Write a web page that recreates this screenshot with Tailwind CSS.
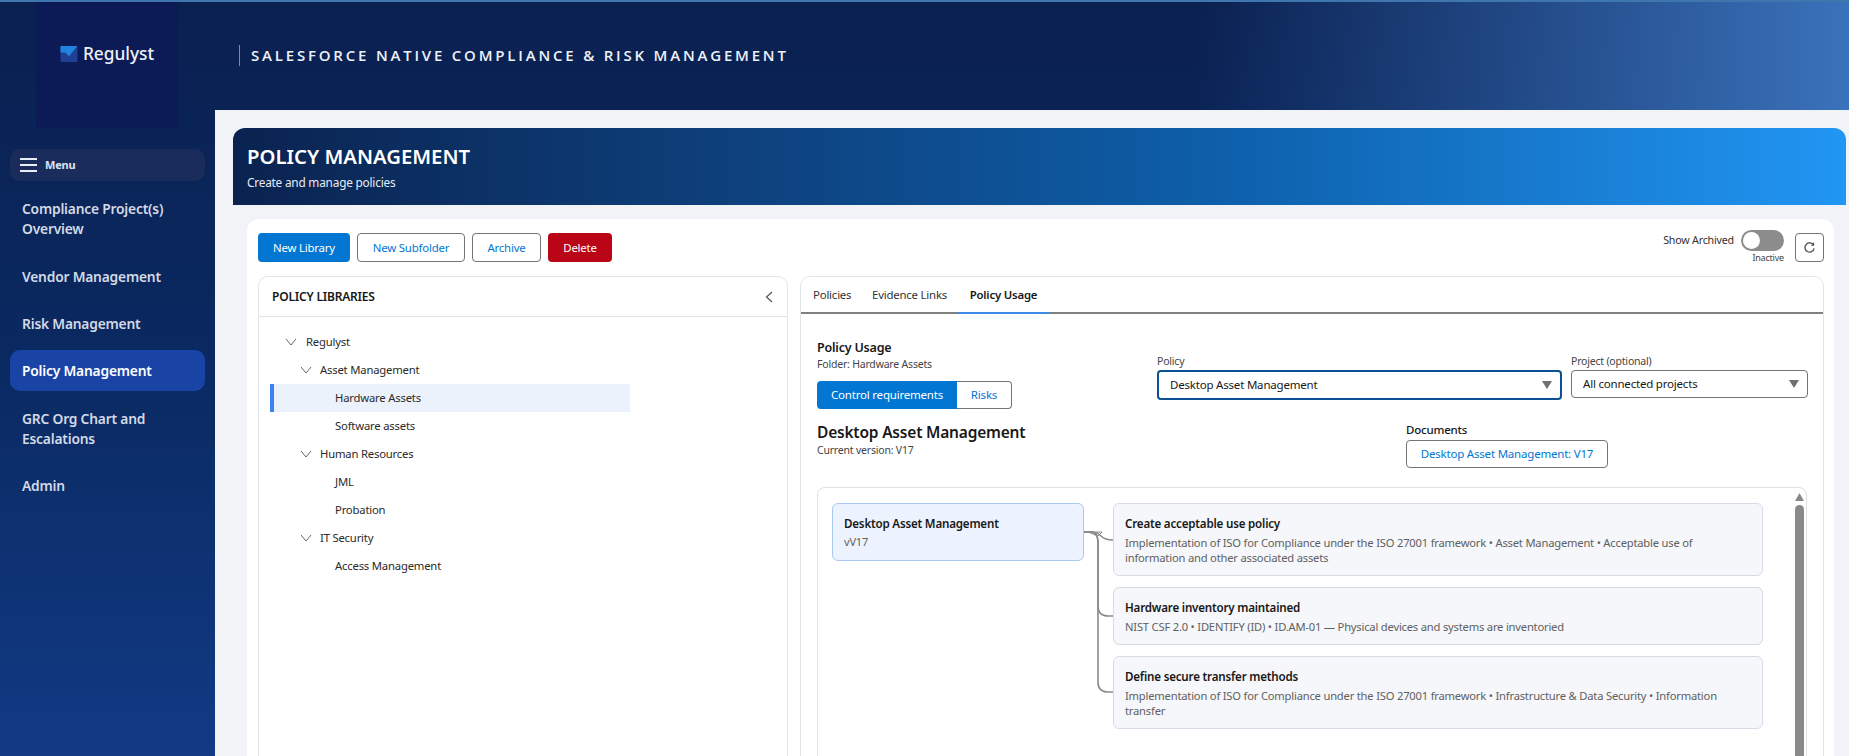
<!DOCTYPE html>
<html lang="en">
<head>
  <meta charset="UTF-8">
  <title>Regulyst - Policy Management</title>
  <script src="https://cdn.jsdelivr.net/npm/@tailwindcss/browser@4"></script>
</head>
<body class="font-['Noto_Sans',sans-serif] text-[#181818] tracking-[-0.2px]">
  <div class="h-[756px] w-[1849px] overflow-hidden flex bg-gradient-to-b from-[#0a2050] via-[#0a2a62] to-[#123a85] relative">
    <div class="absolute top-0 left-0 w-full h-[2px] bg-[#3f76ad]"></div>

    <!-- sidebar -->
    <aside class="w-[215px] shrink-0 flex flex-col">
      <div class="ml-[36px] w-[142px] h-[128px] bg-[#0c1a56] flex items-center justify-center pb-[20px] gap-[5px]">
        <svg width="18" height="16" viewBox="0 0 18 17">
          <rect width="18" height="17" fill="#1f3f94"/>
          <path d="M0 0H18L9 11L5 7L0 7Z" fill="#2183e0"/>
        </svg>
        <span class="text-[17.3px] font-medium text-[#eef1f7] tracking-normal">Regulyst</span>
      </div>
      <div class="mx-[10px] mt-[21px] h-[32px] rounded-[10px] bg-[#1a2c5c] flex items-center pl-[10px] gap-[7px]">
        <svg width="18" height="14" viewBox="0 0 18 14" stroke="#e8ecf5" stroke-width="2"><path d="M0 1H17M0 7H17M0 13H17"/></svg>
        <span class="text-[11px] font-bold text-[#dfe4f0]">Menu</span>
      </div>
      <nav class="mt-[18px] mx-[10px] text-[13.8px] font-semibold text-[#d3d9e6] leading-[20px]">
        <div class="pl-[12px] h-[40px] flex items-center">Compliance Project(s)<br>Overview</div>
        <div class="pl-[12px] h-[47px] mt-[14px] flex items-center">Vendor Management</div>
        <div class="pl-[12px] h-[47px] flex items-center">Risk Management</div>
        <div class="pl-[12px] h-[41px] mt-[3px] flex items-center rounded-[10px] bg-[#1a43a6] text-white">Policy Management</div>
        <div class="pl-[12px] h-[40px] mt-[18px] flex items-center">GRC Org Chart and<br>Escalations</div>
        <div class="pl-[12px] h-[47px] mt-[13px] flex items-center">Admin</div>
      </nav>
    </aside>

    <!-- right side -->
    <div class="flex-1 min-w-0 flex flex-col">
      <header class="h-[110px] shrink-0 bg-gradient-to-r from-transparent via-transparent via-60% to-[#3a72bb] flex items-start">
        <div class="mt-[45px] ml-[24px] h-[21px] border-l border-[#7e8aa8] pl-[11px] text-[15px] font-semibold text-[#eef1f7] tracking-[2.8px] leading-[21px] font-['Open_Sans',sans-serif]">SALESFORCE NATIVE COMPLIANCE &amp; RISK MANAGEMENT</div>
      </header>

      <main class="flex-1 min-h-0 bg-[#f2f3f7] pt-[18px] pl-[18px] pr-[3px]">
        <div class="h-[77px] rounded-t-[12px] bg-gradient-to-r from-[#0a2350] via-[#0d5ea8] via-60% to-[#2196f3] pl-[14px] pt-[14px] text-white">
          <h1 class="text-[20.3px] leading-[28px] font-semibold tracking-normal">POLICY MANAGEMENT</h1>
          <p class="text-[11.8px] leading-[16px] mt-[4px] text-[#e6ebf3]">Create and manage policies</p>
        </div>

        <div class="ml-[14px] mr-[12px] mt-[14px] h-[600px] rounded-[12px] bg-white pt-[14px] pl-[11px] pr-[10px]">
          <!-- toolbar -->
          <div class="flex justify-between h-[29px]">
            <div class="flex gap-[7px] text-[11.4px]">
              <button class="h-[29px] w-[92px] rounded-[4px] bg-[#0176d3] text-white">New Library</button>
              <button class="h-[29px] w-[108px] rounded-[4px] border border-[#747474] bg-white text-[#0176d3]">New Subfolder</button>
              <button class="h-[29px] w-[69px] rounded-[4px] border border-[#747474] bg-white text-[#0176d3]">Archive</button>
              <button class="h-[29px] w-[64px] rounded-[4px] bg-[#ba0517] text-white">Delete</button>
            </div>
            <div class="flex items-start relative">
              <span class="text-[10.7px] leading-[14px] text-[#333]">Show Archived</span>
              <div class="ml-[7px] -mt-[3px] w-[43px] h-[21px] rounded-full bg-[#8c8c8c] p-[2px]">
                <div class="w-[17px] h-[17px] rounded-full bg-white"></div>
              </div>
              <span class="absolute right-[40px] top-[19px] text-[9px] leading-[12px] text-[#444]">Inactive</span>
              <div class="ml-[11px] w-[29px] h-[29px] rounded-[4px] border border-[#747474] flex items-center justify-center">
                <svg width="13" height="13" viewBox="0 0 14 14" fill="none" stroke="#555" stroke-width="1.5"><path d="M11.5 4.5A5 5 0 1 0 12 8"/><path d="M12 1.2V5H8.5" fill="#555" stroke="none"/></svg>
              </div>
            </div>
          </div>

          <div class="flex gap-[12px] mt-[14px] h-[600px]">
            <!-- libraries -->
            <section class="w-[530px] shrink-0 border border-[#e2e4ea] rounded-t-[10px]">
              <div class="h-[40px] border-b border-[#e2e4ea] flex items-center justify-between pl-[13px] pr-[14px]">
                <h2 class="text-[12px] font-semibold">POLICY LIBRARIES</h2>
                <svg width="8" height="12" viewBox="0 0 8 12" fill="none" stroke="#555" stroke-width="1.2"><path d="M7 1L1.5 6L7 11"/></svg>
              </div>
              <div class="pt-[11px] pl-[11px] text-[11.3px] text-[#2b2b2b]">
                <div class="h-[28px] w-[360px] flex items-center pl-[15px] gap-[9px]"><svg width="12" height="8" viewBox="0 0 12 8" fill="none" stroke="#666"><path d="M1 1L6 7L11 1"/></svg>Regulyst</div>
                <div class="h-[28px] w-[360px] flex items-center pl-[30px] gap-[8px]"><svg width="12" height="8" viewBox="0 0 12 8" fill="none" stroke="#666"><path d="M1 1L6 7L11 1"/></svg>Asset Management</div>
                <div class="h-[28px] w-[360px] flex items-center pl-[61px] bg-[#ebf2fc] border-l-[4px] border-[#3b82f6]">Hardware Assets</div>
                <div class="h-[28px] w-[360px] flex items-center pl-[65px]">Software assets</div>
                <div class="h-[28px] w-[360px] flex items-center pl-[30px] gap-[8px]"><svg width="12" height="8" viewBox="0 0 12 8" fill="none" stroke="#666"><path d="M1 1L6 7L11 1"/></svg>Human Resources</div>
                <div class="h-[28px] w-[360px] flex items-center pl-[65px]">JML</div>
                <div class="h-[28px] w-[360px] flex items-center pl-[65px]">Probation</div>
                <div class="h-[28px] w-[360px] flex items-center pl-[30px] gap-[8px]"><svg width="12" height="8" viewBox="0 0 12 8" fill="none" stroke="#666"><path d="M1 1L6 7L11 1"/></svg>IT Security</div>
                <div class="h-[28px] w-[360px] flex items-center pl-[65px]">Access Management</div>
              </div>
            </section>

            <!-- policy usage -->
            <section class="flex-1 min-w-0 border border-[#e2e4ea] rounded-t-[10px]">
              <div class="h-[37px] border-b-2 border-[#808080] flex text-[11.4px] text-[#333] pl-[1px]">
                <span class="w-[59px] flex items-center pl-[11px] pt-[1px]">Policies</span>
                <span class="w-[97px] flex items-center pl-[11px] pt-[1px]">Evidence Links</span>
                <span class="w-[91px] -mb-[2px] flex items-center justify-center pt-[1px] font-semibold text-[#181818] border-b-2 border-[#3b8de8]">Policy Usage</span>
              </div>

              <div class="pl-[16px] pt-[25px]">
                <div class="flex">
                  <div class="w-[340px]">
                    <h3 class="text-[12.5px] leading-[16px] mt-[1px] font-semibold">Policy Usage</h3>
                    <p class="text-[10.5px] leading-[16px] text-[#444]">Folder: Hardware Assets</p>
                    <div class="flex mt-[9px] h-[28px] text-[11.5px]">
                      <span class="w-[140px] rounded-l-[4px] bg-[#0176d3] text-white flex items-center justify-center">Control requirements</span>
                      <span class="w-[55px] rounded-r-[4px] border border-l-0 border-[#747474] text-[#0176d3] flex items-center justify-center">Risks</span>
                    </div>
                  </div>
                  <div class="w-[405px] mt-[14px]">
                    <div class="text-[10.5px] leading-[16px] text-[#444]">Policy</div>
                    <div class="h-[30px] mt-[1px] rounded-[4px] border-2 border-[#0b4f94] flex items-center justify-between pl-[11px] pr-[8px] text-[11.5px]">Desktop Asset Management<svg width="10" height="8" viewBox="0 0 10 8"><path d="M0 0H10L5 8Z" fill="#707070"/></svg></div>
                  </div>
                  <div class="w-[237px] ml-[9px] mt-[14px]">
                    <div class="text-[10.5px] leading-[16px] text-[#444]">Project (optional)</div>
                    <div class="h-[28px] mt-[1px] rounded-[4px] border border-[#747474] flex items-center justify-between pl-[11px] pr-[8px] text-[11.5px]">All connected projects<svg width="10" height="8" viewBox="0 0 10 8"><path d="M0 0H10L5 8Z" fill="#707070"/></svg></div>
                  </div>
                </div>

                <div class="flex mt-[12px]">
                  <div class="w-[589px]">
                    <h2 class="text-[15.5px] leading-[22px] font-semibold">Desktop Asset Management</h2>
                    <p class="text-[10.5px] leading-[14px] text-[#444]">Current version: V17</p>
                  </div>
                  <div class="mt-[1px]">
                    <div class="text-[11.5px] leading-[16px] font-medium">Documents</div>
                    <div class="w-[202px] h-[28px] mt-[2px] rounded-[4px] border border-[#747474] text-[#0176d3] text-[11.5px] flex items-center justify-center">Desktop Asset Management: V17</div>
                  </div>
                </div>

                <!-- flow -->
                <div class="relative mt-[19px] w-[990px] h-[400px] border border-[#dfe1e8] rounded-t-[8px] flex items-start pt-[15px] pl-[14px]">
                  <svg class="absolute left-0 top-0" width="320" height="220" fill="none" stroke="#8a8a8a" stroke-width="1.6">
                    <path d="M266 44H272Q280 44 283 48Q287 52 295 52"/>
                    <path d="M270 44L280 48L284 44Z" stroke-width="1"/>
                    <path d="M266 44H272Q280 44 280 54V118Q280 128 290 128H295"/>
                    <path d="M266 44H272Q280 44 280 54V194Q280 204 290 204H295"/>
                  </svg>
                  <div class="relative w-[252px] h-[58px] shrink-0 rounded-[6px] border border-[#a9c8f2] bg-[#edf3fe] pl-[11px] pt-[12px]">
                    <div class="text-[11.6px] leading-[16px] font-semibold">Desktop Asset Management</div>
                    <div class="text-[11px] leading-[16px] mt-[2px] text-[#606060]">vV17</div>
                  </div>
                  <div class="relative ml-[29px] w-[650px] flex flex-col gap-[11px]">
                    <div class="h-[73px] rounded-[6px] border border-[#d8dbe6] bg-[#f6f7fa] pl-[11px] pt-[12px]">
                      <div class="text-[11.6px] leading-[16px] font-semibold">Create acceptable use policy</div>
                      <div class="text-[11.2px] leading-[15px] mt-[3px] text-[#606060] w-[620px]">Implementation of ISO for Compliance under the ISO 27001 framework • Asset Management • Acceptable use of information and other associated assets</div>
                    </div>
                    <div class="h-[58px] rounded-[6px] border border-[#d8dbe6] bg-[#f6f7fa] pl-[11px] pt-[12px]">
                      <div class="text-[11.6px] leading-[16px] font-semibold">Hardware inventory maintained</div>
                      <div class="text-[11.2px] leading-[15px] mt-[3px] text-[#606060]">NIST CSF 2.0 • IDENTIFY (ID) • ID.AM-01 — Physical devices and systems are inventoried</div>
                    </div>
                    <div class="h-[73px] rounded-[6px] border border-[#d8dbe6] bg-[#f6f7fa] pl-[11px] pt-[12px]">
                      <div class="text-[11.6px] leading-[16px] font-semibold">Define secure transfer methods</div>
                      <div class="text-[11.2px] leading-[15px] mt-[3px] text-[#606060] w-[620px]">Implementation of ISO for Compliance under the ISO 27001 framework • Infrastructure &amp; Data Security • Information transfer</div>
                    </div>
                  </div>
                  <!-- scrollbar -->
                  <div class="absolute right-[2px] top-[5px] w-[10px] flex flex-col items-center">
                    <svg width="9" height="8" viewBox="0 0 9 8"><path d="M4.5 0L9 8H0Z" fill="#8a8a8a"/></svg>
                    <div class="w-[9px] h-[400px] mt-[4px] rounded-full bg-[#8a8a8a]"></div>
                  </div>
                </div>
              </div>
            </section>
          </div>
        </div>
      </main>
    </div>
  </div>
</body>
</html>
